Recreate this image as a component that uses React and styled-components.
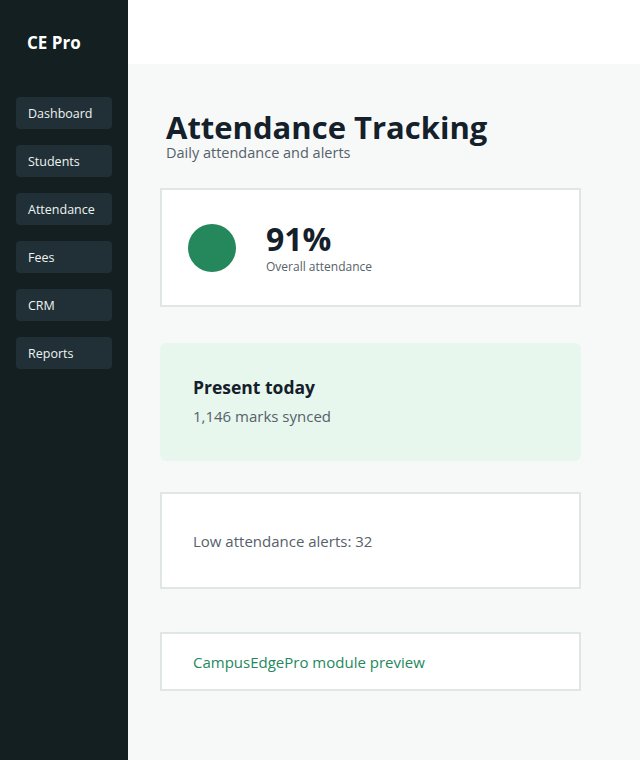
import styled, { createGlobalStyle } from 'styled-components'

const GlobalStyle = createGlobalStyle`
  html, body {
    margin: 0;
    padding: 0;
    background: #f7f9f9;
    font-family: "Open Sans", "Noto Sans", sans-serif;
  }
  * { box-sizing: border-box; }
`

const navItems = ['Dashboard', 'Students', 'Attendance', 'Fees', 'CRM', 'Reports']

const Shell = styled.div`
  display: flex;
  min-height: 760px;
`

const Sidebar = styled.aside`
  width: 128px;
  flex-shrink: 0;
  background: #131f20;
  padding: 0 16px;
`

const Brand = styled.div`
  height: 84px;
  display: flex;
  align-items: center;
  padding-left: 11px;
  color: #ffffff;
  font-size: 17px;
  font-weight: 700;
`

const Nav = styled.nav`
  display: flex;
  flex-direction: column;
  gap: 16px;
  margin-top: 13px;
`

const NavItem = styled.div`
  height: 32px;
  display: flex;
  align-items: center;
  padding: 0 12px;
  background: #213036;
  border-radius: 4px;
  color: #eef3f3;
  font-size: 12.5px;
`

const Main = styled.main`
  flex: 1;
  display: flex;
  flex-direction: column;
`

const TopBar = styled.header`
  height: 64px;
  background: #ffffff;
`

const Content = styled.div`
  padding: 46px 59px 40px 32px;
  display: flex;
  flex-direction: column;
`

const Heading = styled.div`
  padding-left: 6px;
  margin-bottom: 26px;
`

const Title = styled.h1`
  margin: 0;
  font-size: 31px;
  line-height: 34px;
  font-weight: 700;
  color: #14202a;
`

const Subtitle = styled.p`
  margin: 0;
  font-size: 14.5px;
  line-height: 18px;
  color: #56616a;
`

const Card = styled.section`
  background: ${p => (p.$tint ? '#e8f7ee' : '#ffffff')};
  border: ${p => (p.$tint ? 'none' : '2px solid #e0e6e6')};
  border-radius: ${p => (p.$tint ? '6px' : '0')};
  height: ${p => p.$h}px;
  margin-bottom: ${p => p.$gap}px;
  padding: 0 ${p => (p.$tint ? 33 : 31)}px;
  display: flex;
  flex-direction: column;
  justify-content: center;
`

const StatRow = styled.div`
  display: flex;
  align-items: center;
  gap: 30px;
  margin-left: -5px;
`

const Dot = styled.div`
  width: 48px;
  height: 48px;
  border-radius: 50%;
  background: #25875c;
`

const Big = styled.div`
  font-size: 32px;
  font-weight: 700;
  line-height: 36px;
  color: #14202a;
`

const Small = styled.div`
  font-size: 12px;
  color: #56616a;
  line-height: 16px;
  margin-top: 2px;
`

const CardTitle = styled.div`
  font-size: 17.5px;
  font-weight: 700;
  color: #14202a;
  line-height: 24px;
  margin-top: -2px;
`

const CardText = styled.div`
  font-size: 15px;
  color: ${p => (p.$accent ? '#25875c' : '#56616a')};
  line-height: 22px;
  margin-top: ${p => p.$mt || 0}px;
`

export default function App() {
  return (
    <>
      <GlobalStyle />
      <Shell>
        <Sidebar>
          <Brand>CE Pro</Brand>
          <Nav>
            {navItems.map(n => (
              <NavItem key={n}>{n}</NavItem>
            ))}
          </Nav>
        </Sidebar>
        <Main>
          <TopBar />
          <Content>
            <Heading>
              <Title>Attendance Tracking</Title>
              <Subtitle>Daily attendance and alerts</Subtitle>
            </Heading>
            <Card $h={119} $gap={36}>
              <StatRow>
                <Dot />
                <div>
                  <Big>91%</Big>
                  <Small>Overall attendance</Small>
                </div>
              </StatRow>
            </Card>
            <Card $tint $h={118} $gap={31}>
              <CardTitle>Present today</CardTitle>
              <CardText $mt={6}>1,146 marks synced</CardText>
            </Card>
            <Card $h={97} $gap={43}>
              <CardText>Low attendance alerts: 32</CardText>
            </Card>
            <Card $h={59} $gap={0}>
              <CardText $accent>CampusEdgePro module preview</CardText>
            </Card>
          </Content>
        </Main>
      </Shell>
    </>
  )
}
